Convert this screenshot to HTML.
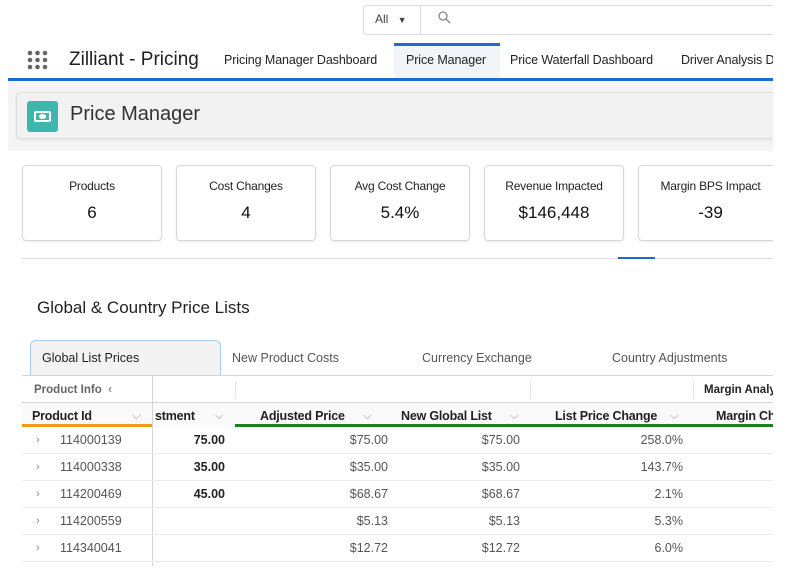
<!DOCTYPE html>
<html><head><style>
*{box-sizing:border-box;margin:0;padding:0}
body{width:790px;height:572px;overflow:hidden;background:#fff;font-family:"Liberation Sans",sans-serif;color:#222;position:relative}
.a{position:absolute}
.clip{position:absolute;left:0;top:0;width:773px;height:572px;overflow:hidden}
.card{position:absolute;top:165px;height:76px;width:140px;border:1px solid #d8d8d8;border-radius:4px;background:#fff;text-align:center;box-shadow:0 1px 2px rgba(0,0,0,.08)}
.card .l{font-size:12px;margin-top:13px;color:#222;letter-spacing:-.2px}
.card .v{font-size:17px;margin-top:10px;color:#111}
.th{position:absolute;top:403px;height:24px;font-size:12.5px;font-weight:bold;color:#222;line-height:26px;letter-spacing:-.2px}
.row{position:absolute;left:22px;width:751px;height:27px;border-bottom:1px solid #ececec;font-size:12.5px;line-height:27px;color:#555}
.row span{position:absolute;text-align:right}
.chev{color:#888;font-size:11px}
.nav{position:absolute;top:53px;font-size:12.5px;color:#222;letter-spacing:-.1px;white-space:nowrap}
</style></head><body>
<div class="clip">
<!-- search -->
<div class="a" style="left:363px;top:5px;width:430px;height:30px;border:1px solid #ddd;border-radius:4px"></div>
<div class="a" style="left:375px;top:12px;font-size:12px;color:#444">All <span style="font-size:9px;margin-left:6px">▼</span></div>
<div class="a" style="left:420px;top:6px;width:1px;height:28px;background:#ddd"></div>
<svg class="a" style="left:438px;top:11px" width="13" height="13"><circle cx="5" cy="5" r="4" fill="none" stroke="#888" stroke-width="1.3"/><line x1="8" y1="8" x2="12" y2="12" stroke="#888" stroke-width="1.3"/></svg>
<!-- nav -->
<svg class="a" style="left:27px;top:50px" width="22" height="20" fill="#666"><circle cx="3" cy="3" r="2.3"/><circle cx="10.5" cy="3" r="2.3"/><circle cx="18" cy="3" r="2.3"/><circle cx="3" cy="10" r="2.3"/><circle cx="10.5" cy="10" r="2.3"/><circle cx="18" cy="10" r="2.3"/><circle cx="3" cy="17" r="2.3"/><circle cx="10.5" cy="17" r="2.3"/><circle cx="18" cy="17" r="2.3"/></svg>
<div class="a" style="left:69px;top:49px;font-size:19px;color:#222">Zilliant - Pricing</div>
<div class="a" style="left:394px;top:43px;width:106px;height:36px;background:#f1f5fa;border-top:3px solid #1b6bd1"></div>
<div class="nav" style="left:224px">Pricing Manager Dashboard</div>
<div class="nav" style="left:406px">Price Manager</div>
<div class="nav" style="left:510px">Price Waterfall Dashboard</div>
<div class="nav" style="left:681px">Driver Analysis D</div>
<div class="a" style="left:8px;top:78px;width:765px;height:3px;background:#1b6bd1"></div>
<!-- gray band -->
<div class="a" style="left:8px;top:81px;width:765px;height:70px;background:#f4f4f4"></div>
<div class="a" style="left:16px;top:92px;width:770px;height:47px;background:#f2f2f2;border:1px solid #ddd;border-radius:4px;box-shadow:0 1px 2px rgba(0,0,0,.08)"></div>
<div class="a" style="left:27px;top:101px;width:31px;height:31px;background:#3fb6ae;border-radius:3px"></div>
<div class="a" style="left:34px;top:111px;width:17px;height:11px;border:2px solid #fff;border-radius:2px"></div>
<div class="a" style="left:39px;top:114px;width:7px;height:5px;background:#fff;border-radius:50%"></div>
<div class="a" style="left:70px;top:103px;font-size:20px;color:#333">Price Manager</div>
<!-- cards -->
<div class="card" style="left:22px"><div class="l">Products</div><div class="v">6</div></div>
<div class="card" style="left:176px"><div class="l">Cost Changes</div><div class="v">4</div></div>
<div class="card" style="left:330px"><div class="l">Avg Cost Change</div><div class="v">5.4%</div></div>
<div class="card" style="left:484px"><div class="l">Revenue Impacted</div><div class="v">$146,448</div></div>
<div class="card" style="left:638px;width:145px"><div class="l">Margin BPS Impact</div><div class="v">-39</div></div>
<div class="a" style="left:22px;top:258px;width:751px;height:1px;background:#ddd"></div>
<div class="a" style="left:618px;top:257px;width:37px;height:2px;background:#1b6bd1"></div>
<div class="a" style="left:37px;top:298px;font-size:17px;color:#222">Global &amp; Country Price Lists</div>
<!-- tabs -->
<div class="a" style="left:30px;top:340px;width:191px;height:36px;background:#f3f3f3;border:1px solid #a9cdf2;border-bottom:none;border-radius:6px 6px 0 0"></div>
<div class="a" style="left:42px;top:351px;font-size:12.5px;color:#222">Global List Prices</div>
<div class="a" style="left:232px;top:351px;font-size:12.5px;color:#555">New Product Costs</div>
<div class="a" style="left:422px;top:351px;font-size:12.5px;color:#555">Currency Exchange</div>
<div class="a" style="left:612px;top:351px;font-size:12.5px;color:#555">Country Adjustments</div>
<!-- table -->
<div class="a" style="left:22px;top:375px;width:751px;height:1px;background:#d6d6d6"></div>
<div class="a" style="left:34px;top:384px;font-size:11.5px;color:#666;font-weight:bold">Product Info &nbsp;<span style="font-weight:normal">‹</span></div>
<div class="a" style="left:235px;top:382px;width:1px;height:17px;background:#e4e4e4"></div>
<div class="a" style="left:530px;top:382px;width:1px;height:17px;background:#e4e4e4"></div>
<div class="a" style="left:693px;top:382px;width:1px;height:17px;background:#e4e4e4"></div>
<div class="a" style="left:704px;top:384px;font-size:11.5px;font-weight:bold;color:#222;white-space:nowrap">Margin Analy</div>
<div class="a" style="left:22px;top:402px;width:751px;height:1px;background:#d6d6d6"></div>
<div class="a" style="left:22px;top:403px;width:751px;height:24px;background:#fafafa"></div>
<div class="th" style="left:32px">Product Id</div><div class="a chev" style="left:132px;top:410px">⌵</div>
<div class="th" style="left:155px">stment</div><div class="a chev" style="left:215px;top:410px">⌵</div>
<div class="th" style="left:260px">Adjusted Price</div><div class="a chev" style="left:363px;top:410px">⌵</div>
<div class="th" style="left:401px">New Global List</div><div class="a chev" style="left:510px;top:410px">⌵</div>
<div class="th" style="left:555px">List Price Change</div><div class="a chev" style="left:670px;top:410px">⌵</div>
<div class="th" style="left:716px;white-space:nowrap">Margin Ch</div>
<div class="a" style="left:22px;top:424px;width:130px;height:3px;background:#f59a14"></div>
<div class="a" style="left:235px;top:424px;width:538px;height:3px;background:#1d7f1d"></div>
<div class="a" style="left:152px;top:376px;width:1px;height:190px;background:#d6d6d6"></div>
<div class="row" style="top:427px"><span class="chev" style="left:14px">›</span><span style="left:38px">114000139</span><span style="right:548px;color:#222;font-weight:bold">75.00</span><span style="right:385px">$75.00</span><span style="right:253px">$75.00</span><span style="right:90px">258.0%</span></div>
<div class="row" style="top:454px"><span class="chev" style="left:14px">›</span><span style="left:38px">114000338</span><span style="right:548px;color:#222;font-weight:bold">35.00</span><span style="right:385px">$35.00</span><span style="right:253px">$35.00</span><span style="right:90px">143.7%</span></div>
<div class="row" style="top:481px"><span class="chev" style="left:14px">›</span><span style="left:38px">114200469</span><span style="right:548px;color:#222;font-weight:bold">45.00</span><span style="right:385px">$68.67</span><span style="right:253px">$68.67</span><span style="right:90px">2.1%</span></div>
<div class="row" style="top:508px"><span class="chev" style="left:14px">›</span><span style="left:38px">114200559</span><span style="right:385px">$5.13</span><span style="right:253px">$5.13</span><span style="right:90px">5.3%</span></div>
<div class="row" style="top:535px"><span class="chev" style="left:14px">›</span><span style="left:38px">114340041</span><span style="right:385px">$12.72</span><span style="right:253px">$12.72</span><span style="right:90px">6.0%</span></div>
</div>
</body></html>
